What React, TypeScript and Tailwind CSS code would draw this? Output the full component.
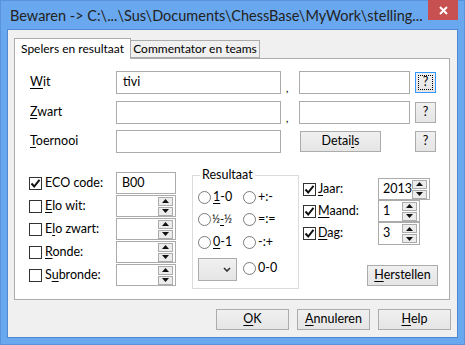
import React from 'react'

const font = { fontFamily: 'Lato, "Liberation Sans", sans-serif' }

const U = ({ children }: { children: React.ReactNode }) => <span className="underline underline-offset-[2px]">{children}</span>

const Check = ({ checked }: { checked?: boolean }) => (
  <div className="w-[13px] h-[13px] border border-[#333333] bg-white flex items-center justify-center shrink-0">
    {checked && (
      <svg width="11" height="11" viewBox="0 0 11 11">
        <path d="M1.5 5.5 L4.2 8.5 L9.5 1.8" fill="none" stroke="#111" strokeWidth="2" />
      </svg>
    )}
  </div>
)

const Radio = () => (
  <div className="w-[13px] h-[13px] rounded-full border border-[#7a7a7a] bg-white shrink-0" />
)

const Arrow = ({ up }: { up?: boolean }) => (
  <svg width="7" height="4" viewBox="0 0 7 4">
    <path d={up ? 'M0 4 L3.5 0 L7 4 Z' : 'M0 0 L7 0 L3.5 4 Z'} fill="#111" />
  </svg>
)

const Spin = ({ value, w, h }: { value?: string; w: string; h: string }) => (
  <div className={`${w} ${h} border border-[#ababab] bg-white flex items-center pl-[4px] pr-[2px]`}>
    <span className="flex-1 text-[12.5px] text-black">{value}</span>
    <div className="flex flex-col gap-[1px]">
      <div className="w-[15px] h-[9px] border border-[#acacac] bg-[#ececec] flex items-center justify-center"><Arrow up /></div>
      <div className="w-[15px] h-[9px] border border-[#acacac] bg-[#ececec] flex items-center justify-center"><Arrow /></div>
    </div>
  </div>
)

const Btn = ({ children, w, focus }: { children: React.ReactNode; w: string; focus?: boolean }) => (
  <div
    className={`${w} h-[21px] border ${focus ? 'border-[#3399ff]' : 'border-[#acacac]'} bg-gradient-to-b from-[#f0f0f0] to-[#e5e5e5] flex items-center justify-center text-[12.5px] text-black shrink-0 ${focus ? 'p-[2px]' : ''}`}
  >
    {focus ? (
      <div className="w-full h-full border border-dotted border-black flex items-center justify-center">{children}</div>
    ) : (
      children
    )}
  </div>
)

const Input = ({ w, value }: { w: string; value?: string }) => (
  <div className={`${w} h-[23px] border border-[#ababab] bg-white flex items-center pl-[6px] text-[12.5px] text-black shrink-0`}>{value}</div>
)

const Comma = () => (
  <div className="w-[18px] h-[23px] flex items-end pl-[5px] pb-[1px] text-[10px] font-bold leading-[10px] text-[#223]">,</div>
)

export default function App() {
  return (
    <div className="w-[465px] h-[345px] bg-[#69a8ee] border border-[#5a93dc] flex flex-col" style={font}>
      <div className="h-[28px] flex items-start">
        <div className="flex-1 pl-[9px] pt-[4px] text-[14.5px] text-[#222] whitespace-nowrap overflow-hidden">
          Bewaren -&gt; C:\...\Sus\Documents\ChessBase\MyWork\stelling...
        </div>
        <div className="w-[30px] h-[20px] -mt-px mr-[6px] bg-[#c75050] flex items-center justify-center shrink-0">
          <svg width="9" height="9" viewBox="0 0 9 9">
            <path d="M1 1 L8 8 M8 1 L1 8" stroke="white" strokeWidth="2" />
          </svg>
        </div>
      </div>
      <div className="ml-[6px] w-[451px] h-[309px] border border-[#4f89d4] bg-[#f0f0f0] flex flex-col">
        <div className="pl-[6px] pt-[8px] flex items-end h-[28px]">
          <div className="relative z-10 w-[117px] h-[21px] -mb-px border border-b-0 border-[#acacac] bg-white text-[12px] text-black flex items-center justify-center whitespace-nowrap">
            Spelers en resultaat
          </div>
          <div className="w-[129px] h-[18px] border border-l-0 border-[#acacac] bg-[#f0f0f0] text-[12px] text-black flex items-center justify-center whitespace-nowrap">
            Commentator en teams
          </div>
        </div>
        <div className="ml-[6px] w-[436px] h-[242px] border border-[#acacac] bg-white text-[12.5px] text-black flex flex-col">
          {/* Wit */}
          <div className="flex items-center mt-[12px] pl-[15px]">
            <div className="w-[86px]"><U>W</U>it</div>
            <Input w="w-[165px]" value="tivi" />
            <Comma />
            <Input w="w-[111px]" />
            <div className="ml-[5px]"><Btn w="w-[21px]" focus>?</Btn></div>
          </div>
          {/* Zwart */}
          <div className="flex items-center mt-[7px] pl-[15px]">
            <div className="w-[86px]"><U>Z</U>wart</div>
            <Input w="w-[165px]" />
            <Comma />
            <Input w="w-[111px]" />
            <div className="ml-[5px]"><Btn w="w-[21px]">?</Btn></div>
          </div>
          {/* Toernooi */}
          <div className="flex items-center mt-[6px] pl-[15px]">
            <div className="w-[86px]"><U>T</U>oernooi</div>
            <Input w="w-[165px]" />
            <div className="ml-[19px]"><Btn w="w-[81px]"><span>Detai<U>l</U>s</span></Btn></div>
            <div className="ml-[34px]"><Btn w="w-[21px]">?</Btn></div>
          </div>
          {/* lower */}
          <div className="flex items-start mt-[14px] pl-[14px]">
            <div className="flex flex-col gap-[1px] pt-[5px]">
              {[
                { label: <>ECO code:</>, checked: true, eco: true },
                { label: <><U>E</U>lo wit:</> },
                { label: <>E<U>l</U>o zwart:</> },
                { label: <><U>R</U>onde:</> },
                { label: <>S<U>u</U>bronde:</> },
              ].map((r, i) => (
                <div key={i} className="flex items-center">
                  <div className="w-[87px] flex items-center gap-[3px]">
                    <Check checked={r.checked} />
                    <span>{r.label}</span>
                  </div>
                  {r.eco ? (
                    <div className="w-[60px] h-[22px] border border-[#ababab] bg-white flex items-center pl-[5px]">B00</div>
                  ) : (
                    <Spin w="w-[60px]" h="h-[22px]" />
                  )}
                </div>
              ))}
            </div>
            <fieldset className="ml-[16px] w-[105px] h-[122px] border border-[#dcdcdc] pl-[5px]">
              <legend className="ml-[2px] px-[2px] leading-[16px]">Resultaat</legend>
              <div className="grid grid-cols-[45px_55px] grid-rows-[22px_23px_23px] items-center mt-[3px]">
                <div className="flex items-center gap-[2px]"><Radio /><span><U>1</U>-0</span></div>
                <div className="flex items-center gap-[2px]"><Radio /><span>+:-</span></div>
                <div className="flex items-center gap-[1px]"><Radio /><span className="text-[11px]">½<U>-</U>½</span></div>
                <div className="flex items-center gap-[2px]"><Radio /><span>=:=</span></div>
                <div className="flex items-center gap-[2px]"><Radio /><span><U>0</U>-1</span></div>
                <div className="flex items-center gap-[2px]"><Radio /><span>-:+</span></div>
              </div>
              <div className="grid grid-cols-[45px_55px] items-start mt-[5px]">
                <div className="w-[39px] h-[23px] -mt-[1px] border border-[#acacac] bg-gradient-to-b from-[#f0f0f0] to-[#e5e5e5] flex items-center justify-end pr-[5px]">
                  <svg width="8" height="5" viewBox="0 0 8 5">
                    <path d="M1 1 L4 4 L7 1" fill="none" stroke="#333" strokeWidth="1.6" />
                  </svg>
                </div>
                <div className="flex items-center gap-[2px]"><Radio /><span>0-0</span></div>
              </div>
            </fieldset>
            <div className="ml-[4px] pt-[11px] flex flex-col">
              {[
                { label: <><U>J</U>aar:</>, v: '2013', w: 'w-[52px]', h: 'h-[22px]' },
                { label: <><U>M</U>aand:</>, v: '1', w: 'w-[42px]', h: 'h-[22px]' },
                { label: <><U>D</U>ag:</>, v: '3', w: 'w-[42px]', h: 'h-[23px]' },
              ].map((r, i) => (
                <div key={i} className="flex items-center">
                  <div className="w-[75px] flex items-center gap-[2px]">
                    <Check checked />
                    <span>{r.label}</span>
                  </div>
                  <Spin value={r.v} w={r.w} h={r.h} />
                </div>
              ))}
              <div className="ml-[64px] mt-[20px]"><Btn w="w-[71px]"><span><U>H</U>erstellen</span></Btn></div>
            </div>
          </div>
        </div>
        <div className="flex justify-end gap-[8px] pr-[6px] mt-[9px]">
          <Btn w="w-[73px]"><span><U>O</U>K</span></Btn>
          <Btn w="w-[73px]"><span><U>A</U>nnuleren</span></Btn>
          <Btn w="w-[73px]"><span><U>H</U>elp</span></Btn>
        </div>
      </div>
    </div>
  )
}
